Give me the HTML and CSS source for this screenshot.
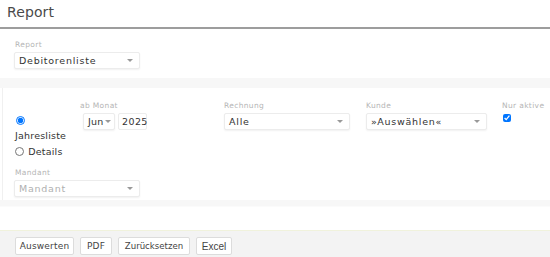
FILE: index.html
```html
<!DOCTYPE html>
<html lang="de">
<head>
<meta charset="utf-8">
<link rel="stylesheet" href="styles.css">
</head>
<body>
<div class="page">
  <header class="head"><h1>Report</h1></header>
  <section class="panel p1">
    <label class="lbl">Report</label>
    <div class="sel w126"><span>Debitorenliste</span><i class="arr"></i></div>
  </section>
  <div class="band"></div>
  <section class="panel p2">
    <div class="row">
      <div class="col c-type">
        <label class="opt first"><input type="radio" name="t" checked><br>Jahresliste</label>
        <label class="opt"><input type="radio" name="t"> Details</label>
      </div>
      <div class="col c-month">
        <label class="lbl">ab Monat</label>
        <div class="pair">
          <div class="sel w32"><span>Jun</span><i class="arr"></i></div>
          <div class="inp">2025</div>
        </div>
      </div>
      <div class="col c-rech">
        <label class="lbl">Rechnung</label>
        <div class="sel w126"><span>Alle</span><i class="arr"></i></div>
      </div>
      <div class="col c-kunde">
        <label class="lbl">Kunde</label>
        <div class="sel w121"><span>»Auswählen«</span><i class="arr"></i></div>
      </div>
      <div class="col c-akt">
        <label class="lbl">Nur aktive</label>
        <input type="checkbox" class="chk" checked>
      </div>
    </div>
    <div class="mand">
      <label class="lbl">Mandant</label>
      <div class="sel w126 dim"><span>Mandant</span><i class="arr"></i></div>
    </div>
  </section>
  <div class="band b2"></div>
  <footer class="bar">
    <button class="btn b-ausw">Auswerten</button>
    <button class="btn b-pdf">PDF</button>
    <button class="btn b-zur">Zurücksetzen</button>
    <button class="btn b-xls">Excel</button>
  </footer>
</div>
</body>
</html>
```

FILE: styles.css
```css
* { box-sizing: border-box; }
html, body { margin: 0; padding: 0; background: #fff; }
body { font-family: "DejaVu Sans", sans-serif; color: #333; }
.page { height: 257px; display: flex; flex-direction: column; overflow: hidden; }
.head { height: 29px; border-bottom: 2px solid #9d9d9d; padding: 2px 7px 0; }
.head h1 { margin: 0; font-weight: normal; font-size: 14px; line-height: 20px; color: #4a4a4a; letter-spacing: 0.1px; }
.panel { background: #fff; }
.p1 { padding: 11px 14px 0; height: 49px; }
.p1 .lbl { padding-left: 1px; }
.lbl { display: block; font-size: 7.5px; color: #b5b5b5; line-height: 10px; margin-bottom: 2px; letter-spacing: 0.35px; white-space: nowrap; }
.sel { height: 17px; border: 1px solid #ececec; border-radius: 2px; box-shadow: 0 1px 2px rgba(0,0,0,0.06); display: flex; align-items: center; justify-content: space-between; padding: 0 6px 0 4px; font-size: 9.5px; letter-spacing: 0.75px; color: #333; background: #fff; white-space: nowrap; }
.sel.dim { color: #b0b0b0; }
.arr { width: 0; height: 0; border-left: 3px solid transparent; border-right: 3px solid transparent; border-top: 3px solid #999; flex: none; }
.w126 { width: 126px; }
.w121 { width: 121px; }
.w32 { width: 32px; padding: 0 3px 0 4px; letter-spacing: 0.2px; }
.band { height: 10px; background: #f7f7f7; }
.p2 { height: 112px; padding: 13px 0 0 13px; border-left: 1px solid #f0f0f0; margin-left: 2px; }
.row { display: grid; grid-template-columns: 64px 144px 142px 136px 1fr; }
.col { display: flex; flex-direction: column; }
.c-type { padding-top: 12px; margin-left: -1px; }
.opt { font-size: 9.5px; color: #333; line-height: 17px; letter-spacing: 0.2px; white-space: nowrap; }
.opt input { width: 9px; height: 9px; margin: 0 1px 0 0; vertical-align: -1px; }
.opt.first { line-height: 15px; }
.opt.first input { margin-left: 1px; }
.pair { display: flex; gap: 3px; padding-left: 3px; }
.inp { height: 17px; width: 29px; border: 1px solid #ececec; border-radius: 2px; font-size: 9.5px; letter-spacing: 0.4px; display: flex; align-items: center; padding-left: 3px; }
.chk { width: 8px; height: 8px; margin: 1px 0 0 1px; }
.mand { margin-top: 8px; margin-left: -2px; }
.mand .lbl { padding-left: 1px; }
.b2 { height: 30px; background: linear-gradient(#f7f7f7 0, #f7f7f7 6px, #fff 7px); }
.bar { flex: 1; border-top: 1px solid #f0f2dc; background: #f3f3f3; display: flex; gap: 6px; padding: 6px 15px 0; align-items: flex-start; }
.btn { font-family: "DejaVu Sans", sans-serif; font-size: 9px; letter-spacing: 0.2px; color: #444; background: #fff; border: 1px solid #dcdcdc; border-radius: 2px; height: 18px; padding: 0; text-align: center; white-space: nowrap; }
.b-ausw { width: 59px; }
.b-pdf { width: 32px; }
.b-zur { width: 72px; font-size: 8.6px; letter-spacing: 0; }
.b-xls { width: 36px; font-family: "Liberation Sans", Arial, sans-serif; font-size: 10px; letter-spacing: 0; }
```
